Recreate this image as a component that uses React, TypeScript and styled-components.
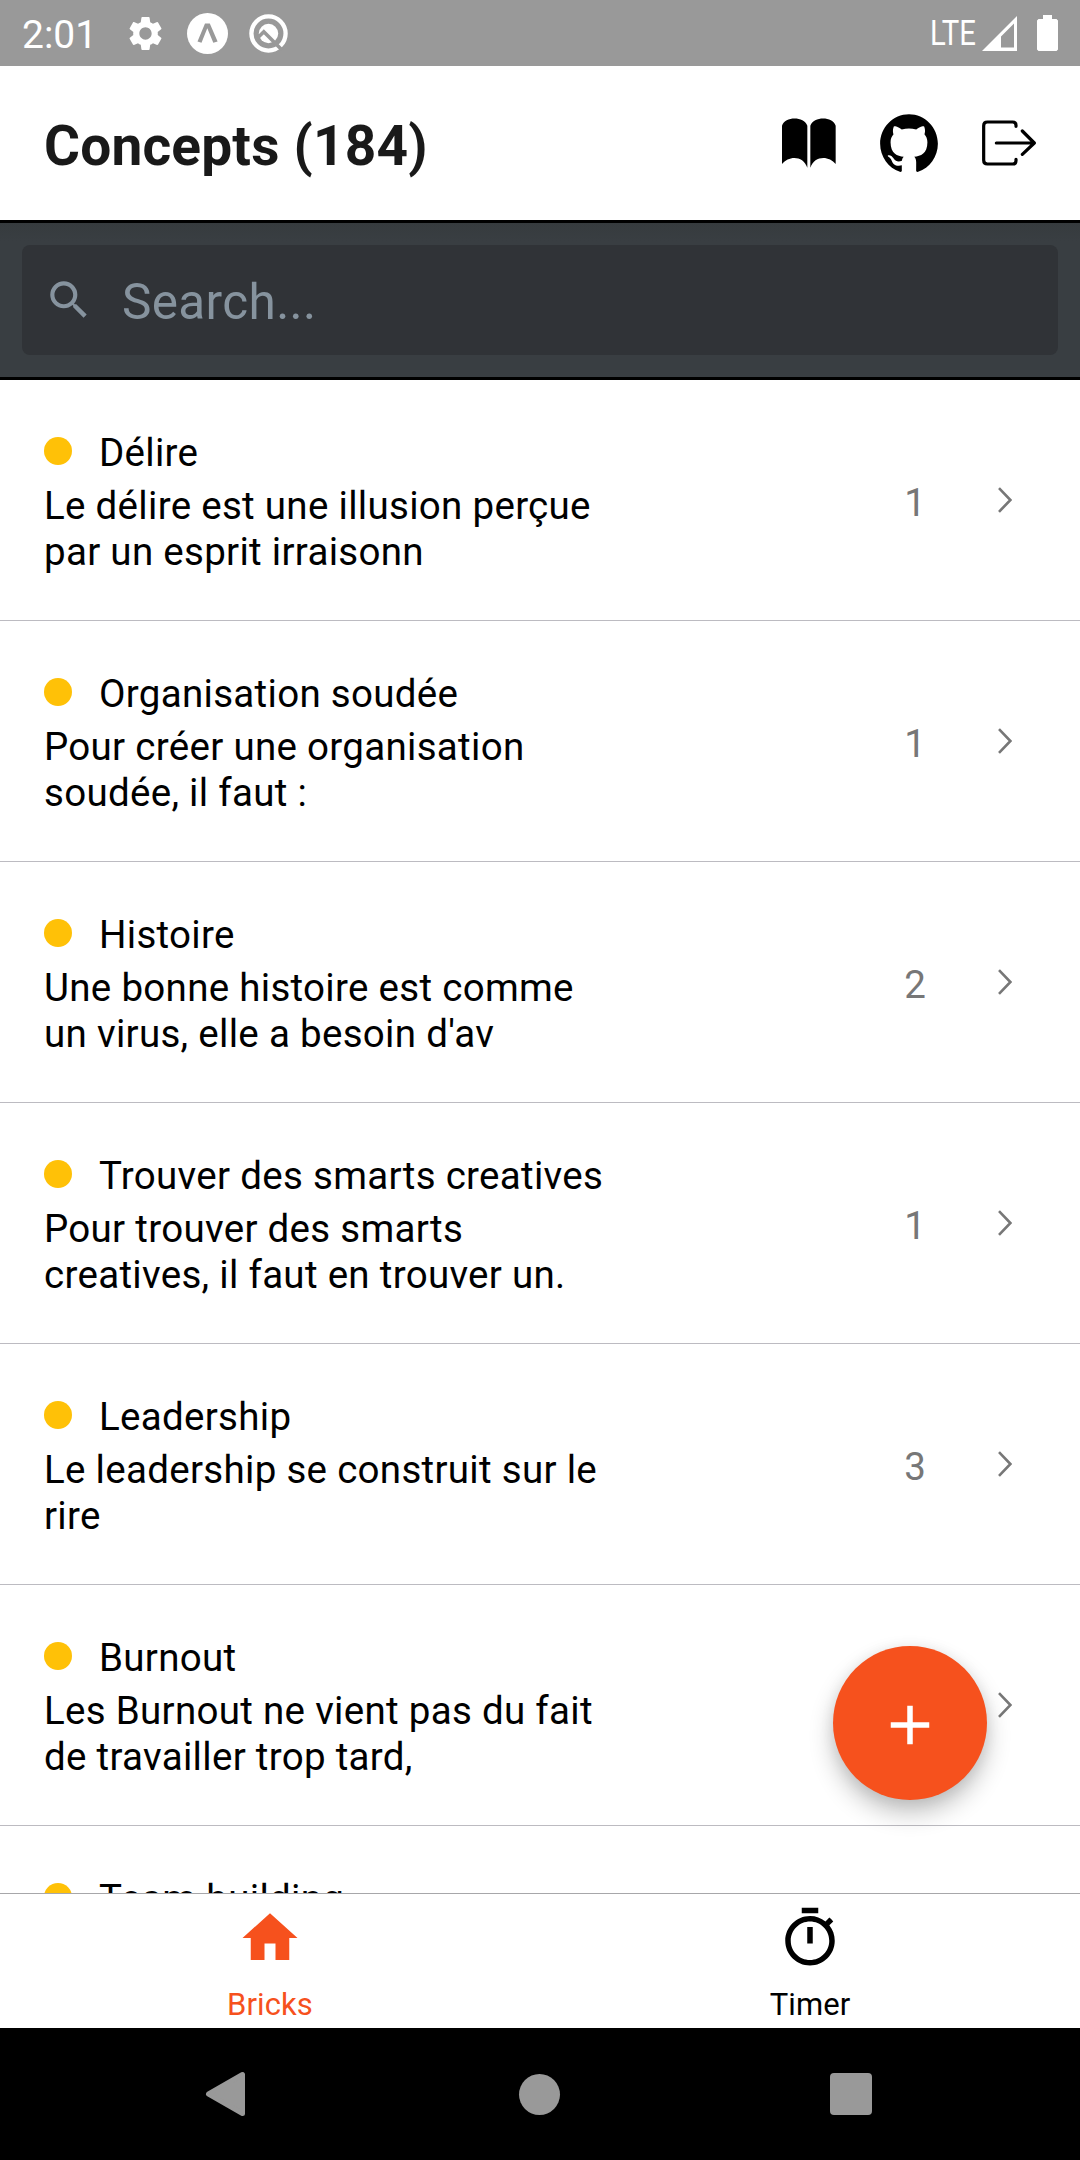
import React from "react";
import styled, { createGlobalStyle } from "styled-components";
import { MdAdd, MdHome, MdSearch, MdSettings } from "react-icons/md";
import { IoLogoGithub } from "react-icons/io5";

const GlobalStyle = createGlobalStyle`
  * { box-sizing: border-box; }
  body { margin: 0; background: #fff; }
  svg { display: block; flex: none; }
`;

const Screen = styled.div`
  display: flex;
  flex-direction: column;
  width: 1080px;
  height: 2160px;
  overflow: hidden;
  background: #fff;
  color: #000;
  font-family: Roboto, "Liberation Sans", sans-serif;
  position: relative;
`;

const StatusBar = styled.div`
  display: flex;
  flex: none;
  align-items: center;
  height: 66px;
  padding: 0 22px;
  background: #999;
  color: #fff;
`;

const Clock = styled.span`
  width: 103px;
  font-size: 39px;
  line-height: 46px;
  padding-top: 3px;
`;

const Notifications = styled.div`
  display: flex;
  flex: 1;
  align-items: center;
  gap: 21px;
`;

const Signals = styled.div`
  display: flex;
  align-items: center;
`;

const Network = styled.span`
  width: 52px;
  font-size: 34.5px;
  line-height: 40px;
  transform: scaleX(0.85);
  transform-origin: left center;
`;

const SignalIcon = styled.svg`
  margin-right: 20px;
`;

const Header = styled.header`
  display: flex;
  flex: none;
  align-items: center;
  justify-content: space-between;
  height: 154px;
  padding: 0 44px;
`;

const Title = styled.h1`
  margin: 6px 0 0;
  font-size: 55px;
  line-height: 64px;
  font-weight: 700;
  letter-spacing: 0.2px;
  color: #191919;
`;

const Actions = styled.div`
  display: flex;
  align-items: center;
`;

const BookIcon = styled.svg`
  margin-right: 40px;
`;

const ExitIcon = styled.svg`
  margin-left: 40px;
`;

const SearchArea = styled.div`
  flex: none;
  height: 160px;
  padding: 22px;
  border-top: 3px solid #000;
  border-bottom: 3px solid #000;
  background: linear-gradient(#363b3e, #393e42 18px);
`;

const SearchField = styled.div`
  display: flex;
  align-items: center;
  height: 110px;
  padding-left: 22px;
  border-radius: 8px;
  background: #303337;
  color: #86939e;
`;

const Placeholder = styled.span`
  margin-left: 28px;
  padding-top: 4px;
  font-size: 49.5px;
  line-height: 58px;
  letter-spacing: 0.35px;
`;

const List = styled.ul`
  flex: 1;
  min-height: 0;
  margin: 0;
  padding: 0;
  overflow: hidden;
  list-style: none;
`;

const Row = styled.li`
  display: flex;
  align-items: center;
  height: 241px;
  padding: 0 68px 0 44px;
  border-bottom: 1px solid #bcbbc1;
`;

const Summary = styled.div`
  flex: 1;
  padding-top: 5px;
  font-size: 38.5px;
  line-height: 46px;
  letter-spacing: 0.3px;
`;

const Name = styled.div`
  display: flex;
  align-items: center;
  margin-bottom: 7px;
`;

const Dot = styled.span`
  width: 28px;
  height: 28px;
  margin: 0 27px 4px 0;
  border-radius: 50%;
  background: #ffc107;
`;

const Description = styled.div`
  min-height: 92px;
  white-space: pre-line;
`;

const Count = styled.span`
  margin-right: 72px;
  padding-top: 6px;
  font-size: 38.5px;
  line-height: 46px;
  color: #777;
`;

const TabBar = styled.nav`
  display: flex;
  flex: none;
  height: 135px;
  border-top: 1px solid #a7a7aa;
  background: #fff;
`;

const Tab = styled.div<{ $active?: boolean }>`
  display: flex;
  flex: 1;
  flex-direction: column;
  align-items: center;
  padding-top: 11px;
  color: ${(p) => (p.$active ? "#f6511d" : "#000")};
`;

const TabLabel = styled.span`
  margin-top: 16px;
  font-size: 31px;
  line-height: 36px;
  letter-spacing: 0.1px;
`;

const SystemNav = styled.div`
  display: flex;
  flex: none;
  align-items: center;
  justify-content: space-between;
  height: 132px;
  padding: 0 208px 0 205px;
  background: #000;
`;

const HomeKey = styled.span`
  width: 41px;
  height: 41px;
  margin-left: 3px;
  border-radius: 50%;
  background: #999;
`;

const RecentKey = styled.span`
  width: 42px;
  height: 42px;
  border-radius: 4px;
  background: #999;
`;

const AddButton = styled.button`
  position: absolute;
  left: 833px;
  top: 1646px;
  display: flex;
  align-items: center;
  justify-content: center;
  width: 154px;
  height: 154px;
  padding: 4px 0 0;
  border: 0;
  border-radius: 50%;
  background: #f6511d;
  color: #fff;
  box-shadow: 0 13px 24px rgba(0, 0, 0, 0.24), 0 2px 14px rgba(0, 0, 0, 0.08);
`;

interface Concept {
  name: string;
  description?: string;
  count?: number;
}

const concepts: Concept[] = [
  { name: "Délire", description: "Le délire est une illusion perçue\npar un esprit irraisonn", count: 1 },
  { name: "Organisation soudée", description: "Pour créer une organisation\nsoudée, il faut :", count: 1 },
  { name: "Histoire", description: "Une bonne histoire est comme\nun virus, elle a besoin d'av", count: 2 },
  { name: "Trouver des smarts creatives", description: "Pour trouver des smarts\ncreatives, il faut en trouver un.", count: 1 },
  { name: "Leadership", description: "Le leadership se construit sur le\nrire", count: 3 },
  { name: "Burnout", description: "Les Burnout ne vient pas du fait\nde travailler trop tard," },
  { name: "Team building" },
];

const ConceptRow = ({ concept }: { concept: Concept }) => (
  <Row>
    <Summary>
      <Name>
        <Dot />
        {concept.name}
      </Name>
      <Description>{concept.description}</Description>
    </Summary>
    {concept.count !== undefined && <Count>{concept.count}</Count>}
    <svg width="14" height="26" viewBox="0 0 14 26" fill="none" stroke="#777" strokeWidth="2.6">
      <path d="M1 1.2 12.4 13 1 24.8" />
    </svg>
  </Row>
);

export default function App() {
  return (
    <Screen>
      <GlobalStyle />
      <StatusBar>
        <Clock>2:01</Clock>
        <Notifications>
          <MdSettings size={41} />
          <svg width="41" height="41" viewBox="0 0 41 41">
            <circle cx="20.5" cy="20.5" r="20.5" fill="#fff" />
            <path d="M10.500 28.500 18 10.400h4.800l7.800 18.100-4.300 1.200-6-14.400-5.800 14.400z" fill="#999" />
          </svg>
          <svg width="39" height="39" viewBox="0 0 39 39" fill="none">
            <circle cx="19.5" cy="19.5" r="17.1" stroke="#fff" strokeWidth="4.3" />
            <circle cx="19.5" cy="19.5" r="9.7" fill="#fff" />
            <path d="m8.500 24 6.300-6.300L33 36" stroke="#999" strokeWidth="3.6" />
          </svg>
        </Notifications>
        <Signals>
          <Network>LTE</Network>
          <SignalIcon width="35" height="35" viewBox="0 0 35 35" fill="#fff">
            <path fillRule="evenodd" d="M35 0v35H0zM32 7.500 19 20.500V31.500h13z" />
          </SignalIcon>
          <svg width="21" height="36" viewBox="0 0 21 36" fill="#fff">
            <path d="M6 0h9v4h4.500L21 5.500v29L19.500 36h-18L0 34.500v-29L1.500 4H6z" />
          </svg>
        </Signals>
      </StatusBar>

      <Header>
        <Title>Concepts (184)</Title>
        <Actions>
          <BookIcon width="54" height="50" viewBox="126 354 162 150">
            <path d="M126 377C135 348 192 348 202 377V503C190 466 146 466 126 492ZM211 377C221 348 278 348 287 377V492C267 466 223 466 211 503Z" />
          </BookIcon>
          <IoLogoGithub size={66} />
          <ExitIcon
            width="54"
            height="46"
            viewBox="726 361 162 138"
            fill="none"
            stroke="#000"
            strokeWidth="9.6"
            strokeLinecap="round"
            strokeLinejoin="round"
          >
            <path d="M828 380V377Q828 367 818 367H742Q731 367 731 378V482Q731 493 742 493H818Q828 493 828 483V479M769 430H882M847 394 883 430 847 464" />
          </ExitIcon>
        </Actions>
      </Header>

      <SearchArea>
        <SearchField>
          <MdSearch size={50} />
          <Placeholder>Search...</Placeholder>
        </SearchField>
      </SearchArea>

      <List>
        {concepts.map((concept) => (
          <ConceptRow key={concept.name} concept={concept} />
        ))}
      </List>

      <TabBar>
        <Tab $active>
          <MdHome size={66} />
          <TabLabel>Bricks</TabLabel>
        </Tab>
        <Tab>
          <svg width="66" height="66" viewBox="0 0 24 24">
            <path d="M15 1H9v2h6V1zm-4 13h2V8h-2v6zm8.030-6.610l1.420-1.420c-.43-.51-.9-.99-1.410-1.410l-1.420 1.420C16.070 4.740 14.120 4 12 4c-4.970 0-9 4.030-9 9s4.020 9 9 9 9-4.030 9-9c0-2.120-.74-4.070-1.970-5.610zM12 20c-3.870 0-7-3.130-7-7s3.130-7 7-7 7 3.130 7 7-3.130 7-7 7z" />
          </svg>
          <TabLabel>Timer</TabLabel>
        </Tab>
      </TabBar>

      <SystemNav>
        <svg width="41" height="46" viewBox="0 0 41 46" fill="#999" stroke="#999" strokeWidth="5" strokeLinejoin="round">
          <path d="M37.500 3.500v39L3.500 23z" />
        </svg>
        <HomeKey />
        <RecentKey />
      </SystemNav>

      <AddButton aria-label="+">
        <MdAdd size={66} />
      </AddButton>
    </Screen>
  );
}
